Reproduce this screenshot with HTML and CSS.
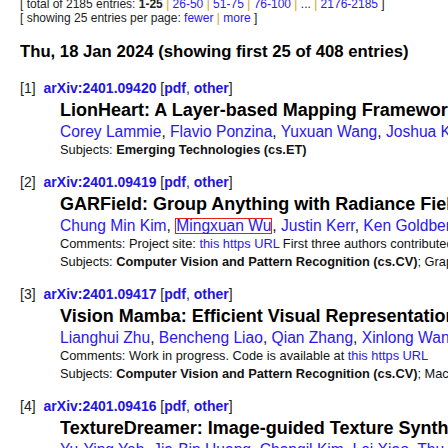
FILE: index.html
```html
<!DOCTYPE html>
<html lang="en">
<head>
<meta charset="utf-8">
<title>Computer Science listing</title>
<link rel="stylesheet" href="styles.css">
</head>
<body>
<div class="page">
  <div class="paging">
    <div class="pline">[ total of 2185 entries: <b>1-25</b> <span class="sep">|</span> <a href="#">26-50</a> <span class="sep">|</span> <a href="#">51-75</a> <span class="sep">|</span> <a href="#">76-100</a> <span class="sep">|</span> ... <span class="sep">|</span> <a href="#">2176-2185</a> ]</div>
    <div class="pline">[ showing 25 entries per page: <a href="#">fewer</a> <span class="sep">|</span> <a href="#">more</a> ]</div>
  </div>
  <h3 class="date">Thu, 18 Jan 2024 (showing first 25 of 408 entries)</h3>
  <dl class="list">
    <dt><span class="num">[1]</span><a class="id" href="#">arXiv:2401.09420</a> [<a class="fmt" href="#">pdf</a>, <a class="fmt" href="#">other</a>]</dt>
    <dd>
      <div class="title">LionHeart: A Layer-based Mapping Framework for Heterogeneous Systems with Analog In-Memory Computing Tiles</div>
      <div class="authors"><a href="#">Corey Lammie</a>, <a href="#">Flavio Ponzina</a>, <a href="#">Yuxuan Wang</a>, <a href="#">Joshua Klein</a>, <a href="#">Marina Zapater</a></div>
      <div class="meta">Subjects: <span class="primary">Emerging Technologies (cs.ET)</span></div>
    </dd>

    <dt><span class="num">[2]</span><a class="id" href="#">arXiv:2401.09419</a> [<a class="fmt" href="#">pdf</a>, <a class="fmt" href="#">other</a>]</dt>
    <dd>
      <div class="title">GARField: Group Anything with Radiance Fields</div>
      <div class="authors"><a href="#">Chung Min Kim</a>, <a class="boxed" href="#">Mingxuan Wu</a>, <a href="#">Justin Kerr</a>, <a href="#">Ken Goldberg</a>, <a href="#">Matthew Tancik</a>, <a href="#">Angjoo Kanazawa</a></div>
      <div class="meta">Comments: Project site: <a href="#">this https URL</a> First three authors contributed equally</div>
      <div class="meta">Subjects: <span class="primary">Computer Vision and Pattern Recognition (cs.CV)</span>; Graphics (cs.GR)</div>
    </dd>

    <dt><span class="num">[3]</span><a class="id" href="#">arXiv:2401.09417</a> [<a class="fmt" href="#">pdf</a>, <a class="fmt" href="#">other</a>]</dt>
    <dd>
      <div class="title">Vision Mamba: Efficient Visual Representation Learning with Bidirectional State Space Model</div>
      <div class="authors"><a href="#">Lianghui Zhu</a>, <a href="#">Bencheng Liao</a>, <a href="#">Qian Zhang</a>, <a href="#">Xinlong Wang</a>, <a href="#">Wenyu Liu</a>, <a href="#">Xinggang Wang</a></div>
      <div class="meta">Comments: Work in progress. Code is available at <a href="#">this https URL</a></div>
      <div class="meta">Subjects: <span class="primary">Computer Vision and Pattern Recognition (cs.CV)</span>; Machine Learning (cs.LG)</div>
    </dd>

    <dt><span class="num">[4]</span><a class="id" href="#">arXiv:2401.09416</a> [<a class="fmt" href="#">pdf</a>, <a class="fmt" href="#">other</a>]</dt>
    <dd>
      <div class="title">TextureDreamer: Image-guided Texture Synthesis through Geometry-aware Diffusion</div>
      <div class="authors"><a href="#">Yu-Ying Yeh</a>, <a href="#">Jia-Bin Huang</a>, <a href="#">Changil Kim</a>, <a href="#">Lei Xiao</a>, <a href="#">Thu Nguyen-Phuoc</a>, <a href="#">Numair Khan</a></div>
      <div class="meta">Subjects: <span class="primary">Computer Vision and Pattern Recognition (cs.CV)</span></div>
    </dd>
  </dl>
</div>
</body>
</html>
```

FILE: styles.css
```css
html, body {
  margin: 0;
  padding: 0;
  background: #ffffff;
  overflow: hidden;
}

body {
  font-family: "Liberation Sans", Arial, sans-serif;
  font-size: 14px;
  color: #111;
}

a {
  color: #2b17f0;
  text-decoration: none;
}

.page {
  margin-top: -3px;
  padding-left: 20px;
  white-space: nowrap;
}

.pline {
  font-size: 12px;
  line-height: 14px;
  color: #222;
}

.sep {
  color: #e39a22;
}

.date {
  margin: 17px 0 16px 0;
  font-size: 16.7px;
  line-height: 20px;
  font-weight: bold;
  color: #000;
}

.list {
  margin: 0;
}

.list dt {
  font-size: 14px;
  line-height: 21px;
  color: #222;
}

.num {
  margin-right: 8px;
}

.id,
.fmt {
  font-weight: bold;
  color: #2414e0;
}

.list dd {
  margin: 0 0 12px 40px;
}

.title {
  font-size: 18px;
  line-height: 23px;
  font-weight: bold;
  color: #000;
}

.authors {
  font-size: 15.6px;
  line-height: 19px;
}

.boxed {
  display: inline-block;
  line-height: 14px;
  border: 1px solid #e3201a;
}

.meta {
  font-size: 12.8px;
  line-height: 18.5px;
  color: #111;
}

.primary {
  font-weight: bold;
}
```
